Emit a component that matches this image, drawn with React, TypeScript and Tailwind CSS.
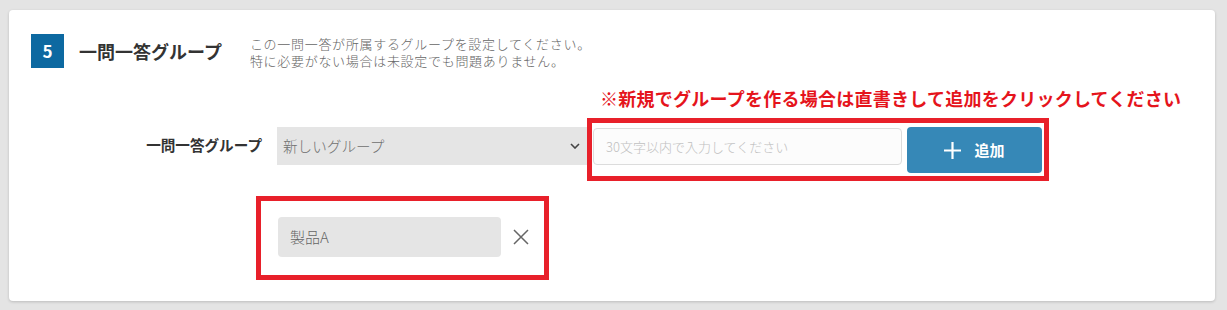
export default function App() {
  return (
    <div
      className="w-[1227px] h-[310px] bg-[#e4e4e4] pl-[9px] pt-[10px] pr-[12px] pb-[9px]"
      style={{ fontFamily: '"Noto Sans CJK JP", "Noto Sans", sans-serif' }}
    >
      <div className="h-full bg-white rounded-[4px] shadow-[0_1px_3px_rgba(0,0,0,0.18)] pl-[22px] pt-[24px]">
        {/* Section header */}
        <div className="flex items-start">
          <div className="w-[33px] h-[34px] bg-[#0d69a1] text-white font-bold text-[17px] flex items-center justify-center">
            5
          </div>
          <h2 className="ml-[15px] h-[34px] flex items-center text-[18px] font-bold text-[#333] leading-none">
            一問一答グループ
          </h2>
          <p className="ml-[28px] mt-[1px] text-[13px] font-light tracking-[0.7px] leading-[17px] text-[#666]">
            この一問一答が所属するグループを設定してください。
            <br />
            特に必要がない場合は未設定でも問題ありません。
          </p>
        </div>

        {/* Notice */}
        <p className="mt-[16px] ml-[569px] text-[18px] tracking-[0.25px] font-bold leading-[26px] text-[#e5141c]">
          ※新規でグループを作る場合は直書きして追加をクリックしてください
        </p>

        {/* Group select row */}
        <div className="mt-[7px] flex items-start">
          <label className="w-[246px] pr-[15px] mt-[17px] text-right text-[14.6px] font-bold text-[#333] leading-[20px]">
            一問一答グループ
          </label>
          <div className="mt-[9px] w-[310px] h-[38px] bg-[#e5e5e5] flex items-center justify-between pl-[6px] pr-[7px]">
            <span className="text-[14.6px] font-light text-[#707070]">新しいグループ</span>
            <svg width="10" height="6" viewBox="0 0 10 6" fill="none">
              <path d="M1 1l4 4 4-4" stroke="#444" strokeWidth="1.6" />
            </svg>
          </div>
          <div className="w-[462px] h-[63px] border-[5px] border-[#e8202a] flex items-start pt-[4px] pl-px gap-[5px]">
            <input
              className="mt-[1px] w-[309px] h-[37px] rounded-[4px] border border-[#dcdcdc] bg-[#fcfcfc] px-[12px] text-[13px] font-light outline-none placeholder:text-[#c0c0c0]"
              placeholder="30文字以内で入力してください"
            />
            <button className="w-[135px] h-[46px] rounded-[4px] bg-[#3688b7] text-white flex items-center justify-center gap-[13px]">
              <svg width="17" height="17" viewBox="0 0 17 17">
                <path d="M8.5 0v17M0 8.5h17" stroke="white" strokeWidth="2.2" />
              </svg>
              <span className="text-[15px] font-bold">追加</span>
            </button>
          </div>
        </div>

        {/* Registered group */}
        <div className="mt-[15px] ml-[225px] w-[293px] h-[84px] border-[5px] border-[#e8202a] pl-[17px] pt-[16px] flex items-start">
          <div className="w-[223px] h-[40px] rounded-[4px] bg-[#e5e5e5] flex items-center pl-[12px] text-[15px] font-light text-[#666]">
            製品A
          </div>
          <button className="ml-[12px] mt-[12px] w-[16px] h-[16px]">
            <svg width="16" height="16" viewBox="0 0 16 16">
              <path d="M1 1l14 14M15 1L1 15" stroke="#666" strokeWidth="1.5" />
            </svg>
          </button>
        </div>
      </div>
    </div>
  );
}
